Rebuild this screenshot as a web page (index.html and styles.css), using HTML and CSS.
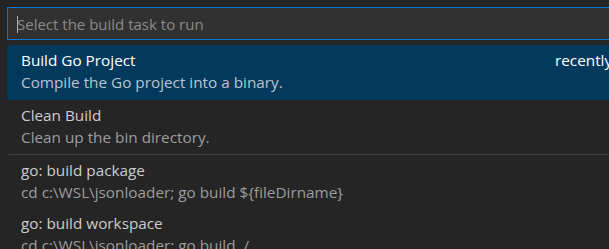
FILE: index.html
```html
<!DOCTYPE html>
<html>
<head>
<meta charset="utf-8">
<link rel="stylesheet" href="styles.css">
</head>
<body>
<div class="quick-pick">
  <div class="input-box">
    <span class="caret"></span>
    <input class="input" type="text" placeholder="Select the build task to run">
  </div>
  <div class="list">
    <div class="row selected">
      <div class="row-main">
        <div class="title">Build Go Project</div>
        <div class="desc">Compile the Go project into a binary.</div>
      </div>
      <div class="label">recently used</div>
    </div>
    <div class="row">
      <div class="row-main">
        <div class="title">Clean Build</div>
        <div class="desc">Clean up the bin directory.</div>
      </div>
    </div>
    <div class="row separated">
      <div class="row-main">
        <div class="title">go: build package</div>
        <div class="desc">cd c:\WSL\jsonloader; go build ${fileDirname}</div>
      </div>
    </div>
    <div class="row">
      <div class="row-main">
        <div class="title">go: build workspace</div>
        <div class="desc">cd c:\WSL\jsonloader; go build ./...</div>
      </div>
    </div>
  </div>
</div>
</body>
</html>
```

FILE: styles.css
```css
html, body {
  margin: 0;
  padding: 0;
  background: #252526;
  overflow: hidden;
  width: 609px;
  height: 249px;
}

.quick-pick {
  width: 720px;
  padding: 7px 0 0 7px;
  font-family: "Open Sans", "Noto Sans", sans-serif;
  font-size: 15.3px;
  color: #cccccc;
}

.input-box {
  position: relative;
  height: 31px;
  border: 1px solid #0078d4;
  background: #313131;
  display: flex;
  align-items: center;
}

.input {
  flex: 1;
  border: none;
  outline: none;
  background: transparent;
  font: inherit;
  font-size: 15px;
  color: #cccccc;
  padding: 0 0 0 9px;
  height: 100%;
}

.input::placeholder {
  color: #8a8a8a;
}

.caret {
  position: absolute;
  left: 9px;
  top: 8px;
  width: 1px;
  height: 17px;
  background: #aeafad;
}

.list {
  margin-top: 5px;
}

.row {
  display: flex;
  height: 54px;
  box-sizing: border-box;
  padding: 4px 14px 0 14px;
  border-radius: 3px;
}

.row.selected {
  background: #04395e;
  color: #ffffff;
  height: 55px;
}

.row.separated {
  border-top: 1px solid #3f3f3f;
  border-radius: 0;
  margin-left: 2px;
  padding-left: 12px;
}

.row-main {
  flex: none;
  width: 534px;
  white-space: nowrap;
}

.title {
  line-height: 22px;
}

.desc {
  line-height: 22px;
  color: #9d9d9d;
}

.selected .desc {
  color: #b8c4cf;
}

.label {
  line-height: 22px;
  white-space: nowrap;
}
```
